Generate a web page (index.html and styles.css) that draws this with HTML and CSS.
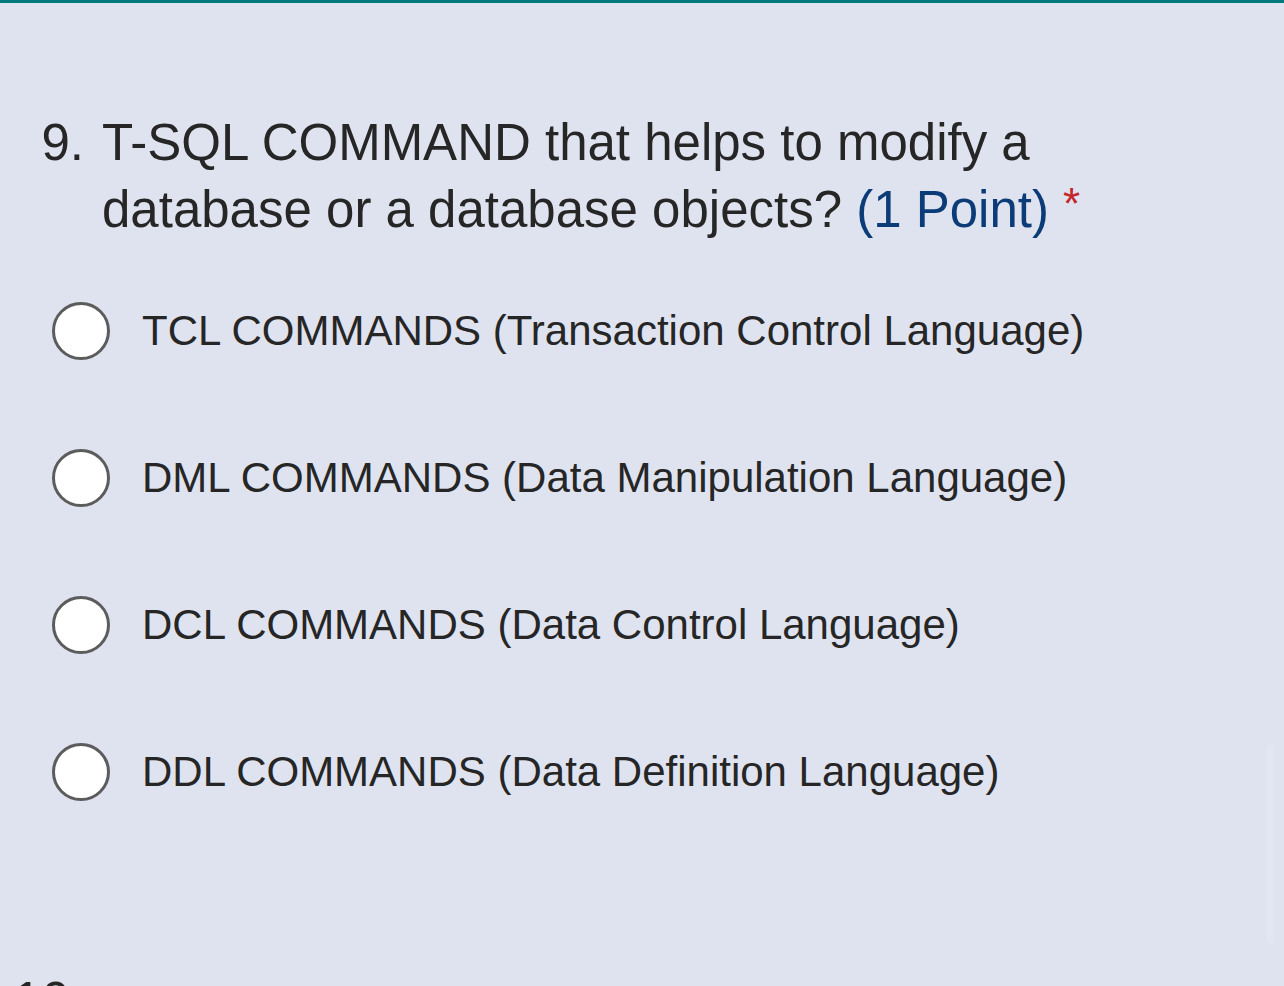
FILE: index.html
```html
<!DOCTYPE html>
<html>
<head>
<meta charset="utf-8">
<link rel="stylesheet" href="styles.css">
</head>
<body>
<div class="page">
  <div class="question">
    <div class="q-num">9.</div>
    <div class="q-text">T-SQL COMMAND that helps to modify a database or a database objects? <span class="points">(1&nbsp;Point)</span><span class="req">*</span></div>
  </div>
  <div class="options">
    <div class="option"><span class="radio"></span><span class="label">TCL COMMANDS (Transaction Control Language)</span></div>
    <div class="option"><span class="radio"></span><span class="label">DML COMMANDS (Data Manipulation Language)</span></div>
    <div class="option"><span class="radio"></span><span class="label">DCL COMMANDS (Data Control Language)</span></div>
    <div class="option"><span class="radio"></span><span class="label">DDL COMMANDS (Data Definition Language)</span></div>
  </div>
  <div class="question next">
    <div class="q-num">10.</div>
    <div class="q-text"></div>
  </div>
</div>
<div class="scrollbar"></div>
</body>
</html>
```

FILE: styles.css
```css
html, body {
  margin: 0;
  padding: 0;
  height: 100%;
  overflow: hidden;
}
body {
  background: #dfe3ef;
  font-family: "Liberation Sans", Arial, Helvetica, sans-serif;
  color: #262626;
  border-top: 3px solid #017a7b;
  box-sizing: border-box;
  position: relative;
}
.page {
  padding: 106px 0 0 0;
}
.question {
  display: grid;
  grid-template-columns: 84px 1fr;
  column-gap: 18px;
  font-size: 51px;
  line-height: 67px;
  width: 1100px;
}
.q-num {
  text-align: right;
}
.q-text {
  width: 1000px;
}
.points {
  color: #0b3c78;
}
.req {
  color: #c4262e;
  margin-left: 14px;
  font-size: 44px;
  line-height: 0;
  vertical-align: 8px;
}
.options {
  display: flex;
  flex-direction: column;
  gap: 89px;
  padding: 59px 0 0 52px;
}
.option {
  display: flex;
  align-items: center;
  height: 58px;
  font-size: 42px;
  line-height: 58px;
}
.radio {
  width: 52px;
  height: 52px;
  border: 3px solid #5c5c5c;
  border-radius: 50%;
  background: #ffffff;
  flex: none;
  margin-right: 32px;
}
.next {
  margin-top: 166px;
}
.scrollbar {
  position: absolute;
  right: 9px;
  top: 741px;
  width: 9px;
  height: 200px;
  border-radius: 5px;
  background: #e3e6f0;
}
```
